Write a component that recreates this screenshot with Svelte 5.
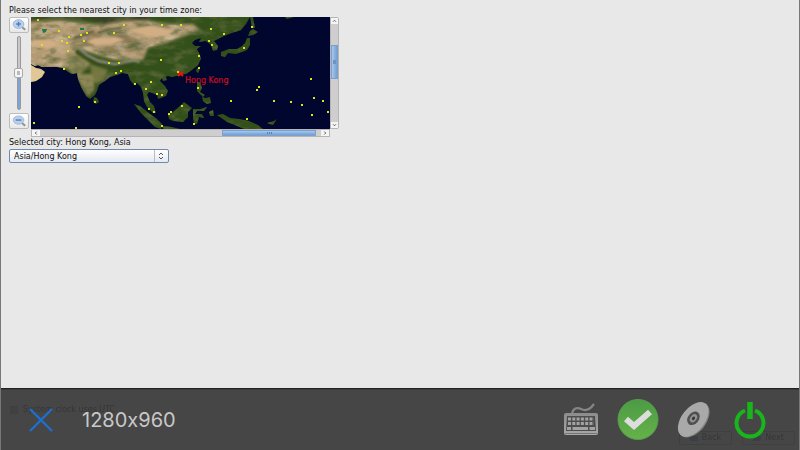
<script>
  let zoom = $state(50);
  let city = $state('Asia/Hong Kong');
  let utc = $state(true);
  const cities = [
    [38,20],[59,31],[69,37],[62,41],[67,43],[81,35],[87,33],[84,41],[68,51],[42,45],[64,69],
    [114,33],[124,25],[162,25],[161,60],[109,63],[119,63],[121,71],[116,73],[181,25],[211,29],[224,34],
    [209,41],[212,45],[252,27],[244,48],[199,56],[199,68],[198,88],[135,84],[151,82],[146,89],[157,94],
    [162,95],[149,109],[154,112],[171,112],[169,114],[182,106],[162,126],[194,124],[34,123],[76,128],
    [79,107],[95,102],[231,101],[247,119],[257,90],[259,87],[274,101],[291,102],[302,105],[311,79],
    [312,115],[314,98],[323,101],[328,112]
  ];
</script>

<div class="page">
  <main>
    <p>Please select the nearest city in your time zone:</p>
    <div class="picker">
      <div class="zoom">
        <button aria-label="Zoom in">
          <svg viewBox="0 0 19 14"><path class="handle" d="M12 8.5 16 12"/><ellipse cx="9" cy="6" rx="5.6" ry="4.6"/><path class="sign" d="M6.5 6h5M9 3.5v5"/></svg>
        </button>
        <input type="range" min="0" max="100" bind:value={zoom} aria-label="Map zoom" />
        <button aria-label="Zoom out">
          <svg viewBox="0 0 19 14"><path class="handle" d="M12 8.5 16 12"/><ellipse cx="9" cy="6" rx="5.6" ry="4.3"/><path class="sign" d="M6 6h6"/></svg>
        </button>
      </div>
      <div class="view">
        <svg class="map" viewBox="31 17 299 112" role="img" aria-label="World map">
          <defs>
            <filter id="terrain" x="0" y="0" width="100%" height="100%">
              <feTurbulence type="fractalNoise" baseFrequency=".07 .14" numOctaves="5" seed="8" />
              <feColorMatrix values="0 0 0 0 .12  0 0 0 0 .15  0 0 0 0 .05  2.2 0 0 0 -1" />
            </filter>
            <filter id="light" x="0" y="0" width="100%" height="100%">
              <feTurbulence type="fractalNoise" baseFrequency=".06 .12" numOctaves="5" seed="21" />
              <feColorMatrix values="0 0 0 0 .85  0 0 0 0 .75  0 0 0 0 .58  0 2 0 0 -.85" />
            </filter>
            <filter id="soft"><feGaussianBlur stdDeviation="1.8" /></filter>
            <filter id="edge"><feGaussianBlur stdDeviation=".8" /></filter>
            <clipPath id="arid">
              <path d="M31 24 60 21 103 26 122 22 145 21 166 25 188 25 193 30 180 36 166 43 148 47 141 58 118 60 98 54 79 49 72 60 66 70 31 68Z"/>
            </clipPath>
            <clipPath id="land">
              <path d="M31 17H250L246 24 241 30 232 33 224 36 214 41 218 46 217 50 213 51 211 45 206 41 199 42 201 38 195 40 192 43 195 46 201 46 197 49 200 55 201 59 198 65 192 70 186 74 180 75 172 77 168 76 162 78 160 81 165 86 168 91 166 96 158 99 157 95 152 93 149 92 147 95 150 102 154 106 156 113 153 113 147 107 144 101 143 93 141 87 137 83 134 85 130 80 128 74 122 73 117 75 110 77 105 81 99 85 97 91 95 95 90 99 86 96 81 87 78 79 77 73 72 74 68 72 63 68 57 67 42 67 38 65 35 66 31 64Z"/>
              <path d="M31 65 36 68 41 69 45 72 42 77 36 81 31 82Z"/>
              <path d="M94 97 97 98 99 102 96 104 93 102ZM134 104 140 106 149 113 157 119 162 124 161 129 155 127 147 119 141 113Z"/>
              <path d="M168 115 174 111 180 106 184 102 192 108 188 112 188 117 183 122 173 121 169 119ZM193 109 200 109 207 107 204 111 197 111 195 114 202 114 204 118 199 117 197 124 194 124 193 118Z"/>
              <path d="M197 82 200 82 202 88 200 92 205 95 203 97 197 91ZM202 97 206 98 210 97 211 103 207 104 203 101ZM197 68 200 69 198 73 196 71ZM162 78 166 77 167 80 163 81Z"/>
              <path d="M221 52 229 49 237 49 242 46 245 43 247 38 250 38 250 45 247 50 242 52 236 54 228 53 225 57 221 56ZM250 31 253 29 258 32 253 35 248 36ZM250 17H253L255 28 252 28ZM285 17H294L287 19Z"/>
              <path d="M162 126 172 127 180 129H163ZM209 112 213 110 214 116 210 116ZM217 115 223 114 230 118 239 119 249 121 258 125 263 129H244L237 126 227 122ZM267 123 274 121 277 119 273 125Z"/>
            </clipPath>
          </defs>
          <rect x="31" y="17" width="299" height="112" fill="#00062d" />
          <g clip-path="url(#land)">
            <rect x="31" y="17" width="299" height="112" fill="#34501a" />
            <g filter="url(#soft)">
              <path fill="#b39a73" d="M25 22 60 20 103 25 122 21 145 20 166 24 193 24 200 30 184 36 166 43 148 48 143 60 114 60 94 54 79 49 69 68 27 68Z"/>
              <path fill="#394322" d="M25 12H150L147 21 119 20 104 25 92 19 60 18 25 19Z"/>
              <path fill="#8d7a54" d="M72 34 90 31 108 34 122 31 132 38 150 42 146 50 128 52 100 50 82 44Z"/>
              <path fill="#8f8757" d="M66 53 81 54 91 64 80 74 94 74 94 90 88 96 78 80 68 69Z"/>
              <path fill="#77783f" d="M90 64 108 70 104 80 96 84 92 76Z"/>
            </g>
            <g clip-path="url(#arid)">
              <rect x="31" y="17" width="165" height="53" filter="url(#light)" opacity=".5" />
            </g>
            <rect x="31" y="17" width="299" height="112" filter="url(#terrain)" />
            <g filter="url(#edge)">
              <path fill="#d2ae84" d="M86 42 94 38 116 37 125 40 113 44 96 46ZM130 30 149 26 176 30 166 36 147 37ZM33 40 50 39 62 45 47 49 32 45Z"/>
              <path fill="#e2c796" d="M29 64 47 70 40 84 29 83Z"/>
              <g fill="none">
                <path stroke="#354a15" stroke-width="3" d="M76 51 84 57 98 63 112 66 133 66"/>
                <path stroke="#969582" stroke-width="2" d="M80 48 87 55 99 61 115 64 134 60 140 62"/>
                <path stroke="#4e5230" stroke-width="1.5" d="M73 39 86 34 94 31M98 33 110 29 121 28"/>
              </g>
            </g>
            <path d="M42 29 47 29 46 32 43 33ZM80 28h4v2h-4Z" fill="#24764b" />
          </g>
          {#each cities as [x, y]}
            <rect x={x - 1} y={y - 1} width="2" height="2" fill="#dce51c" />
          {/each}
          <path d="M178 72l5 4M183 72l-5 4" stroke="#f01010" stroke-width="2" />
          <rect x="177" y="71" width="2" height="2" fill="#ffc400" />
          <text x="185" y="83">Hong Kong</text>
        </svg>
        <div class="bar vertical">
          <button aria-label="Scroll up"><svg viewBox="0 0 8 8"><path d="M2 5 4 3 6 5"/></svg></button>
          <span class="grip"></span>
          <button aria-label="Scroll down"><svg viewBox="0 0 8 8"><path d="M2 3 4 5 6 3"/></svg></button>
        </div>
        <div class="bar horizontal">
          <button aria-label="Scroll left"><svg viewBox="0 0 8 8"><path d="M5 2 3 4 5 6"/></svg></button>
          <span class="grip"></span>
          <button aria-label="Scroll right"><svg viewBox="0 0 8 8"><path d="M3 2 5 4 3 6"/></svg></button>
        </div>
      </div>
    </div>
    <label class="chosen" for="city">Selected city: Hong Kong, Asia</label>
    <div class="select">
      <select id="city" bind:value={city}>
        <option>Asia/Hong Kong</option>
        <option>Asia/Tokyo</option>
      </select>
      <svg viewBox="0 0 14 12"><path class="rule" d="M.5 0v12"/><path d="M5 5 7 3 9 5M5 7 7 9 9 7"/></svg>
    </div>
  </main>

  <footer>
    <div class="behind">
      <label><input type="checkbox" bind:checked={utc} />System clock uses UTC</label>
      <div class="nav">
        <button><i></i>Back</button>
        <button><i></i>Next</button>
      </div>
    </div>
    <button class="close" aria-label="Close">
      <svg viewBox="0 0 26 26"><path d="M2 2 24 24M24 2 2 24" stroke="#1d6fd0" stroke-width="2.4" fill="none"/></svg>
    </button>
    <span class="size">1280x960</span>
    <div class="tools">
      <button aria-label="Keyboard">
        <svg width="36" height="34" viewBox="0 0 36 34">
          <defs><linearGradient id="keys" x2="0" y2="1"><stop stop-color="#8c8c8c"/><stop offset="1" stop-color="#a8a8a8"/></linearGradient></defs>
          <path d="M9 11C10 5 14 4 18 6S26 8 31 1" fill="none" stroke="#858585" stroke-width="2.2"/>
          <rect x="1" y="10" width="34" height="22" rx="2" fill="url(#keys)"/>
          <path d="M4 13H32L33 28H3Z" fill="#4d4d4d"/>
          <path d="M5 16H31M5 20.5H31" stroke="#a2a2a2" stroke-width="3" stroke-dasharray="3 1.3"/>
          <path d="M4 25.5H8M9.5 25.5H25M26.5 25.5H32" stroke="#a2a2a2" stroke-width="2.8"/>
          <path d="M2 30.5H34" stroke="#777"/>
        </svg>
      </button>
      <button aria-label="Confirm">
        <svg width="42" height="42" viewBox="0 0 42 42">
          <defs><linearGradient id="ok" x2="0" y2="1"><stop stop-color="#4c9b45"/><stop offset="1" stop-color="#65b24a"/></linearGradient></defs>
          <circle cx="21" cy="20.5" r="20" fill="url(#ok)" stroke="#559e4a"/>
          <path d="M9 20 17 27 33 13" fill="none" stroke="#ddd" stroke-width="6"/>
        </svg>
      </button>
      <button aria-label="Disc">
        <svg width="34" height="38" viewBox="0 0 34 38">
          <g transform="rotate(-52 17 19)">
            <ellipse cx="17" cy="19" rx="20" ry="12" fill="#858585"/>
            <ellipse cx="17" cy="18" rx="20" ry="11.5" fill="#a9a9a9"/>
            <ellipse cx="18" cy="17.5" rx="7.5" ry="5.5" fill="#505050"/>
            <ellipse cx="18" cy="17.5" rx="4.5" ry="3" fill="#929292"/>
            <ellipse cx="18" cy="17.5" rx="2" ry="1.4" fill="#383838"/>
          </g>
        </svg>
      </button>
      <button class="power" aria-label="Power">
        <svg width="32" height="38" viewBox="0 0 32 38">
          <path d="M11 9.5A13.5 13.5 0 1 0 21 9.5" fill="none" stroke="#18b51d" stroke-width="4"/>
          <path d="M16 1V18" stroke="#18b51d" stroke-width="5.5"/>
        </svg>
      </button>
    </div>
  </footer>
</div>

<style>
  :global(body) { margin: 0; }
  * { box-sizing: border-box; }
  button { padding: 0; margin: 0; border: 0; background: none; font: inherit; color: inherit; }
  svg { display: block; }
  .page {
    display: flex; flex-direction: column; min-height: 100vh;
    background: #e8e8e8; border: solid #777; border-width: 0 1px;
    font: 8px/10px "DejaVu Sans", sans-serif; color: #111;
  }
  main { flex: 1; padding: 6px 8px; }
  p { margin: 0 0 1px; }
  .picker { display: flex; gap: 2px; }
  .zoom { display: flex; flex-direction: column; justify-content: space-between; align-items: center; width: 20px; height: 112px; }
  .zoom button { width: 20px; height: 16px; border: 1px solid #bbb; border-radius: 2px; background: linear-gradient(#fff, #e7e7e7); }
  .zoom svg { width: 18px; height: 14px; fill: #b9d0ec; stroke: #9fb6d3; }
  .zoom .sign { stroke: #4f7fbe; stroke-width: 1.5; }
  .zoom .handle { stroke: #8e9290; stroke-width: 2; }
  input[type="range"] {
    appearance: none; writing-mode: vertical-lr; direction: rtl;
    width: 9px; height: 74px; margin: 0; background: none;
  }
  input[type="range"]::-webkit-slider-runnable-track {
    width: 4px; border: 1px solid #999; border-radius: 2px;
    background: linear-gradient(#c9c9c9 50%, #7ba4da 50%);
  }
  input[type="range"]::-webkit-slider-thumb {
    appearance: none; width: 9px; height: 10px; margin-left: -4px;
    border: 1px solid #aaa; border-radius: 2px;
    background: linear-gradient(#bbb, #bbb) center / 3px 4px no-repeat #f5f5f5;
  }
  .view { display: grid; grid-template: 112px 8px / 299px 9px; }
  .map { width: 299px; height: 112px; }
  .map text { font: 8px "DejaVu Sans", sans-serif; fill: #cf0a22; stroke: #cf0a22; stroke-width: .2px; }
  .bar { display: flex; background: #cfcdce; border: 1px solid #b5b5b5; }
  .bar button { flex: none; background: #f5f5f5; border: 0 solid #aaa; }
  .bar svg { width: 100%; height: 100%; fill: none; stroke: #333; }
  .grip { flex: none; border: 1px solid #7f9fcb; }
  .vertical { flex-direction: column; justify-content: space-between; border-radius: 0 2px 2px 0; }
  .vertical button { height: 6px; }
  .vertical .grip { height: 34px; margin-bottom: 22px; background: linear-gradient(#6f93c2, #6f93c2) center / 3px 4px no-repeat, linear-gradient(90deg, #a5c8ef, #729fd6); }
  .horizontal { justify-content: flex-end; }
  .horizontal button { width: 8px; }
  .horizontal button:first-child { margin-right: auto; }
  .horizontal .grip { width: 94px; margin-right: 5px; background: repeating-linear-gradient(90deg, #5c80b0 0 1px, transparent 1px 2px) center / 5px 2px no-repeat, linear-gradient(#a5c8ef, #729fd6); }
  .chosen { display: block; margin: 1px 0; }
  .select { position: relative; width: 160px; height: 14px; }
  select {
    appearance: none; width: 100%; height: 100%; padding: 1px 16px 0 4px;
    border: 1px solid #7189b0; border-radius: 2px; background: linear-gradient(#fff, #e4e9f1);
    font: inherit; color: #111;
  }
  .select svg { position: absolute; right: 1px; top: 1px; width: 14px; height: 12px; fill: none; stroke: #555; pointer-events: none; }
  .select .rule { stroke: #bbb; }
  footer {
    position: relative; display: flex; align-items: center; height: 62px;
    padding: 0 33px 0 27px; background: #464646; border-top: 1px solid #222;
    box-shadow: inset 0 1px #3b3b3b;
  }
  .close { width: 26px; height: 26px; }
  .size { margin-left: 28px; font: 20px/24px Inter, sans-serif; font-feature-settings: "calt" 0; color: #c8c8c8; }
  .tools { display: flex; align-items: center; gap: 18px; margin-left: auto; }
  .power { margin-left: 5px; }
  .tools, .close, .size { z-index: 1; }
  .behind { position: absolute; inset: 0; padding: 16px 4px 5px 9px; display: flex; flex-direction: column; justify-content: space-between; color: #161616; opacity: .35; }
  .behind label { display: flex; align-items: center; gap: 5px; }
  .behind input { appearance: none; width: 8px; height: 8px; margin: 0; border: 1px solid #333; }
  .behind input:checked { background: #383838; }
  .nav { display: flex; justify-content: flex-end; gap: 10px; }
  .nav button { display: flex; align-items: center; justify-content: center; gap: 4px; width: 53px; height: 14px; border: 1px solid #333; border-radius: 2px; }
  .nav i { width: 8px; height: 5px; background: #273345; }
</style>
